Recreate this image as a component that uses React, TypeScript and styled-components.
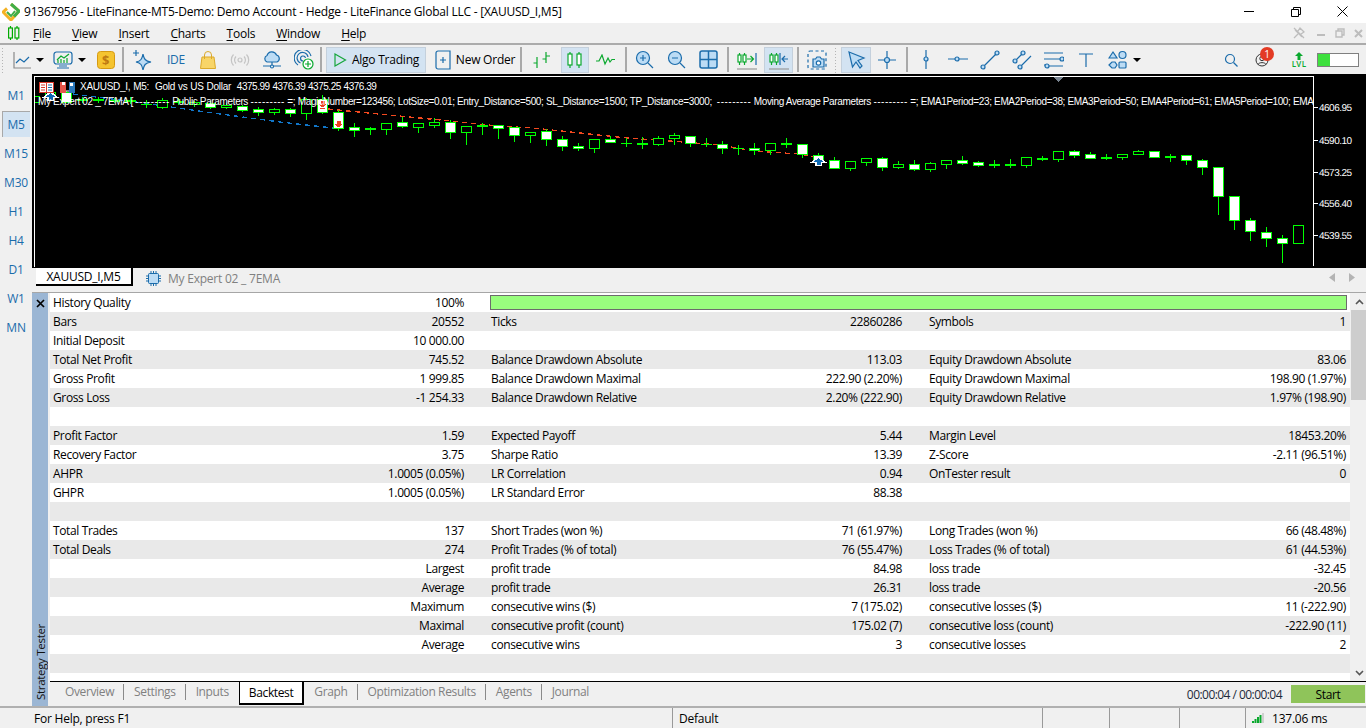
import React from "react";
import styled, { createGlobalStyle } from "styled-components";

const Global = createGlobalStyle`
  html, body { margin: 0; padding: 0; background: #f0f0f0; overflow: hidden; }
  * { box-sizing: border-box; }
`;
const FONT = `"Open Sans", "Noto Sans", sans-serif`;
const CHART_FONT = `"Liberation Sans", sans-serif`;
const BLUE = "#1b6cab";
const LIGHT = "#bcdcf5";
const GREEN = "#0aa82e";

const Page = styled.div`
  width: 1366px; height: 728px; display: flex; flex-direction: column; overflow: hidden;
  font-family: ${FONT}; font-size: 12px; color: #000; background: #f0f0f0; letter-spacing: -0.23px;
`;
const TitleBar = styled.div`
  height: 23px; background: #fff; display: flex; align-items: center; padding-left: 2px; flex: none;
`;
const TitleText = styled.span`margin-left: 4px; white-space: nowrap;`;
const WindowButtons = styled.div`margin-left: auto; display: flex; height: 100%;`;
const WindowButton = styled.div`width: 47px; display: flex; align-items: center; justify-content: center;`;
const MenuBar = styled.div`
  height: 20px; display: flex; align-items: center; padding-left: 8px; flex: none; position: relative;
`;
const MenuList = styled.div`display: flex; gap: 21px; margin-left: 13px;`;
const MenuItem = styled.span`white-space: nowrap; u { text-decoration-thickness: 1px; text-underline-offset: 2px; }`;
const DocButtons = styled.div`margin-left: auto; display: flex; align-items: center; gap: 6px; padding-right: 1px;`;
const Toolbar = styled.div`
  height: 31px; flex: none; border-top: 2px solid #ababab; display: flex; align-items: center;
`;
const Grip = styled.div<{ $w: number }>`
  width: ${p => p.$w}px; height: 26px; flex: none;
  background-image: radial-gradient(#b5b5b5 0.8px, transparent 1px);
  background-size: 3px 3px; background-repeat: repeat-y; background-position: 1px 0;
`;
const Sep = styled.div<{ $ml?: number }>`width: 2px; height: 25px; background: #a9a9a9; flex: none; margin-left: ${p => p.$ml ?? 0}px;`;
const Tool = styled.div<{ $w?: number; $on?: boolean; $ml?: number }>`
  width: ${p => p.$w ?? 32}px; height: 26px; flex: none; margin-left: ${p => p.$ml ?? 0}px;
  display: flex; align-items: center; justify-content: center; gap: 5px; white-space: nowrap;
  background: ${p => (p.$on ? "#d3e3f2" : "transparent")};
  box-shadow: ${p => (p.$on ? "inset 0 0 0 1px #c4d0dc, inset 1px 1px 0 #a8a8a8" : "none")};
`;
const IdeLabel = styled.span`color: ${BLUE}; font-size: 12px; font-weight: 400;`;
const Caret = styled.span`
  width: 0; height: 0; border-left: 4px solid transparent; border-right: 4px solid transparent; border-top: 4px solid #000;
`;
const Spacer = styled.div`flex: 1;`;
const Level = styled.div`
  width: 42px; height: 14px; border: 1px solid #808080; background: #fff; margin: 0 7px 0 3px; flex: none;
`;
const LevelFill = styled.div`width: 12px; height: 100%; background: #3ee03e;`;
const Body = styled.div`flex: 1; display: flex; min-height: 0;`;
const Frames = styled.div`
  width: 32px; flex: none; display: flex; flex-direction: column; padding-top: 8px; gap: 3px; align-items: center;
`;
const Frame = styled.div<{ $on?: boolean }>`
  width: 28px; height: 26px; display: flex; align-items: center; justify-content: center; color: ${BLUE}; font-size: 12px;
  background: ${p => (p.$on ? "#d3e3f2" : "transparent")};
  box-shadow: ${p => (p.$on ? "inset 1px 1px 0 #a8a8a8" : "none")};
`;
const Main = styled.div`flex: 1; min-width: 0; display: flex; flex-direction: column;`;
const Chart = styled.div`height: 194px; background: #000; position: relative; overflow: hidden; flex: none;`;
const ChartSvg = styled.svg`display: block; width: 1334px; height: 194px;`;
const Legend = styled.div`
  position: absolute; left: 48px; top: 7px; line-height: 12px; color: #fff; font-family: ${CHART_FONT}; font-size: 10px; white-space: pre; letter-spacing: -0.27px; word-spacing: 0.4px;
`;
const Quotes = styled.span`letter-spacing: -0.47px;`;
const Comment = styled.div`
  position: absolute; left: 6px; top: 22px; line-height: 12px; width: 1275px; overflow: hidden; color: #fff; font-family: ${CHART_FONT}; font-size: 10px; white-space: pre; letter-spacing: -0.35px;
`;
const Dashes = styled.span`letter-spacing: 0.5px;`;
const LegendIcon = styled.svg<{ $x: number }>`position: absolute; left: ${p => p.$x}px; top: 8px;`;
const TabStrip = styled.div`
  height: 24px; flex: none; display: flex; align-items: flex-start; padding-left: 4px; position: relative;
`;
const ChartTab = styled.div`
  width: 97px; height: 18px; background: #fff; border-right: 2px solid #000; border-bottom: 2px solid #000;
  display: flex; align-items: center; justify-content: center; font-size: 12px;
`;
const ExpertTab = styled.div`
  display: flex; align-items: center; gap: 7px; color: #808080; margin: 1px 0 0 13px; height: 19px;
`;
const TabArrows = styled.div`margin-left: auto; display: flex; gap: 14px; padding: 5px 11px 0 0;`;
const Tester = styled.div`flex: 1; min-height: 0; display: flex; border-top: 1px solid #a6a6a6;`;
const Side = styled.div`
  width: 16px; flex: none; background: #9bb6d4; margin-right: 2px; display: flex; flex-direction: column; align-items: center; justify-content: space-between;
`;
const SideX = styled.div`height: 20px; display: flex; align-items: center;`;
const SideLabel = styled.div`
  writing-mode: vertical-rl; transform: rotate(180deg); font-size: 11.5px; padding-top: 6px; letter-spacing: -0.3px; color: #111;
`;
const TesterBody = styled.div`flex: 1; min-width: 0; display: flex; flex-direction: column;`;
const TableArea = styled.div`height: 388px; flex: none; display: flex; background: #f0f0f0;`;
const Table = styled.div`width: 1300px; flex: none; background: #fff; height: 388px; letter-spacing: -0.37px;`;
const Row = styled.div<{ $alt: boolean }>`
  height: 19px; display: grid; grid-template-columns: 438px 438px 424px; background: ${p => (p.$alt ? "#e9e9e9" : "#fff")}; align-items: center;
`;
const Cell = styled.div<{ $last?: boolean }>`
  display: flex; justify-content: space-between; padding: 0 ${p => (p.$last ? 4 : 24)}px 0 3px; white-space: nowrap; position: relative;
`;
const Bar = styled.div`
  grid-column: 2 / 4; height: 15px; margin: 0 3px 0 2px; background: #99fe7e; border: 1px solid #6c6c6c;
`;
const Scroll = styled.div`width: 16px; margin-left: 1px; flex: none; display: flex; flex-direction: column;`;
const ScrollBtn = styled.div<{ $h: number }>`height: ${p => p.$h}px; flex: none; display: flex; align-items: center; justify-content: center;`;
const Thumb = styled.div`height: 90px; background: #cdcdcd; flex: none;`;
const Track = styled.div`flex: 1;`;
const BottomTabs = styled.div`
  flex: 1; border-top: 1px solid #000; display: flex; align-items: flex-start; position: relative; padding-left: 5px; color: #808080; letter-spacing: -0.37px;
`;
const BTab = styled.div<{ $on?: boolean; $sep?: boolean }>`
  height: 19px; margin-top: 0; padding: 0 10px; display: flex; align-items: center; position: relative; white-space: nowrap;
  ${p => p.$on ? `background:#fff;color:#000;height:23px;border:1px solid #000;border-top:none;border-bottom-width:2px;border-right-width:2px;padding:0 9px;` : ""}
  ${p => p.$sep ? `&::after{content:"";position:absolute;right:0;top:2px;height:16px;width:1px;background:#8a8a8a;}` : ""}
`;
const BTabs = styled.div`display: flex;`;
const TimeBox = styled.div`
  margin-left: auto; display: flex; align-items: center; height: 24px; color: #1d2a3a; gap: 9px; padding-right: 1px;
`;
const TimeText = styled.span`letter-spacing: -0.55px;`;
const Start = styled.div`
  width: 74px; height: 18px; background: #8fc45a; display: flex; align-items: center; justify-content: center; color: #000;
`;
const Status = styled.div`height: 22px; flex: none; border-top: 2px solid #b0b0b0; display: flex; align-items: stretch;`;
const StatusCell = styled.div<{ $w?: number; $first?: boolean }>`
  ${p => (p.$w ? `width:${p.$w}px;flex:none;` : "flex:1;")}
  border-left: ${p => (p.$first ? "none" : "1px solid #999")};
  display: flex; align-items: center; padding-left: ${p => (p.$first ? 34 : 6)}px; gap: 8px; white-space: nowrap;
`;

const S = ({ w = 20, h = 20, children }: { w?: number; h?: number; children: React.ReactNode }) => (
  <svg width={w} height={h} viewBox={`0 0 ${w} ${h}`} fill="none" stroke={BLUE} strokeWidth={1.2}>{children}</svg>
);

const Logo = () => (
  <svg width="18" height="18" viewBox="0 0 18 18" fill="none">
    <path d="M9 1 L17 8 L9 17 L1 9 L5 5.5" stroke="#f4b223" strokeWidth="3" />
    <path d="M9 1 L17 8 L12 13.5" stroke="#3fae49" strokeWidth="3" />
    <path d="M5 9 L9 13 L13 8" stroke="#3fae49" strokeWidth="2" />
  </svg>
);
const MenuChart = () => (
  <svg width="12" height="14" viewBox="0 0 12 14" fill="none" stroke="#0a0" strokeWidth="1.2" style={{ flex: "none" }}>
    <path d="M2.5 0v2M2.5 12v2M9 0v2M9 12v2" /><rect x="0.6" y="2" width="3.8" height="10" /><rect x="7" y="2" width="3.8" height="10" />
  </svg>
);
const Candle = ({ x, y, h, w = 4, c = GREEN }: { x: number; y: number; h: number; w?: number; c?: string }) => (
  <g stroke={c}><path d={`M${x} ${y - 2}V${y + h + 3}`} /><rect x={x - w / 2} y={y} width={w} height={h} fill="#fff" /></g>
);
const ICONS: Record<string, React.ReactNode> = {
  line: <S w={18} h={18}><path d="M1 1V17H18" stroke="#8a8a8a" /><path d="M3 12L7 8L11 11L16 6" /></S>,
  monitor: <S><rect x="1" y="2" width="18" height="12" rx="2.5" /><path d="M4 18H16M6 16H14" /><path d="M4 10L8 6L11 8L16 4" stroke={GREEN} /><path d="M5 13V10M8 13V9M11 13V10M14 13V8" stroke={GREEN} /></S>,
  gold: <svg width="18" height="18" viewBox="0 0 18 18"><rect x="0.5" y="0.5" width="17" height="17" rx="3" fill="#f5c430" stroke="#d69a12" /></svg>,
  spark: <S><path d="M11 4C12 9 13 11 19 12C13 13 12 15 11 20C10 15 9 13 4 12C9 11 10 9 11 4Z" fill={LIGHT} /><path d="M4 0V6M1 3H7" stroke={BLUE} /></S>,
  bag: <svg width="16" height="18" viewBox="0 0 16 18" fill="#f8d568" stroke="#dba92a"><path d="M2 6H14L15.5 17.5H0.5Z" /><path d="M4.5 8V4A3.5 3.5 0 0 1 11.5 4V8" fill="none" /></svg>,
  radio: <S h={14}><g stroke="#c4c4c4"><circle cx="10" cy="7" r="2" /><path d="M6 3.5A5 5 0 0 0 6 10.5M14 3.5A5 5 0 0 1 14 10.5M3.5 1.5A8 8 0 0 0 3.5 12.5M16.5 1.5A8 8 0 0 1 16.5 12.5" /></g></S>,
  cloud: <S><path d="M5 12A3.5 3.5 0 0 1 5 5.5A5 5 0 0 1 14.5 5A3.7 3.7 0 0 1 15 12Z" fill={LIGHT} /><path d="M10 12V16M1 16H19" /><circle cx="10" cy="16.5" r="1.5" fill="#fff" /></S>,
  signal: <S><path d="M4 15A8.5 8.5 0 1 1 17 6M6.5 13A5.5 5.5 0 1 1 14 7M9 11A2.5 2.5 0 1 1 11.5 8" /><circle cx="14" cy="14" r="5" fill="#fff" stroke={GREEN} /><path d="M14 11V17M11 14H17" stroke={GREEN} /></S>,
  play: <svg width="14" height="14" viewBox="0 0 14 14" fill="none" stroke="#16a63c" strokeWidth="1.2"><path d="M2 1L12.5 7L2 13Z" /></svg>,
  order: <S w={16} h={20}><path d="M3 1H15V19H3A2 2 0 0 1 1 17V3A2 2 0 0 1 3 1Z" /><path d="M8 7V13M5 10H11" /></S>,
  bars: <S h={18}><g stroke={GREEN}><path d="M5 6V17M1.5 12H5" /><path d="M14 1V12M14 5H18M10.5 8H14" /></g></S>,
  candles: <S h={20}><Candle x={5} y={4} h={11} /><Candle x={14} y={4} h={11} /></S>,
  wave: <S h={12}><path d="M0 7H3L6 1L9 10L12 4L14 8L16 5.5H19" stroke={GREEN} /></S>,
  zoomIn: <S><circle cx="8" cy="8" r="6.5" fill={LIGHT} /><path d="M13 13L18 18M5 8H11M8 5V11" /></S>,
  zoomOut: <S><circle cx="8" cy="8" r="6.5" fill={LIGHT} /><path d="M13 13L18 18M5 8H11" /></S>,
  grid: <S><rect x="1" y="1" width="17" height="17" rx="2" fill={LIGHT} strokeWidth="1.5" /><path d="M9.5 1V18M1 9.5H18" strokeWidth="1.5" /></S>,
  shiftR: <S h={20}><Candle x={2.5} y={5} h={7} w={3} /><Candle x={7.5} y={5} h={7} w={3} /><path d="M10 9H16M13.5 6L16.5 9L13.5 12" stroke={GREEN} /><path d="M19 3V15" /><path d="M0 19H20" stroke="#999" /></S>,
  shiftL: <S h={20}><Candle x={2.5} y={5} h={7} w={3} /><Candle x={7.5} y={5} h={7} w={3} /><path d="M11 3V15M13 9H19M16 6L13 9L16 12" /><path d="M0 19H20" stroke="#999" /></S>,
  camera: <S><rect x="1" y="1" width="18" height="18" rx="2" strokeDasharray="3 2.5" /><path d="M6 9H8.5L10 7H13L14.5 9H17V17H6Z" fill={LIGHT} /><circle cx="11.5" cy="13" r="2.2" fill="#fff" /></S>,
  cursor: <S><path d="M3 2L18 8L12 10.5L16 16L14 18L10 12L6.5 17Z" fill={LIGHT} /></S>,
  cross: <S h={18}><path d="M9 0V6M9 12V18M0 9H6M12 9H18" /><circle cx="9" cy="9" r="2.5" fill={LIGHT} /></S>,
  vline: <S w={8} h={20}><path d="M4 0V7M4 11V19" /><circle cx="4" cy="9" r="2" fill={LIGHT} /></S>,
  hline: <S><path d="M0 9H7M11 9H20" /><circle cx="9" cy="9" r="2" fill={LIGHT} /></S>,
  trend: <S><circle cx="3" cy="17" r="2" fill={LIGHT} /><circle cx="17" cy="3" r="2" fill={LIGHT} /><path d="M4.5 15.5L15.5 4.5" /></S>,
  channel: <S><circle cx="3" cy="11" r="2" fill={LIGHT} /><circle cx="11" cy="3" r="2" fill={LIGHT} /><circle cx="8" cy="17" r="2" fill={LIGHT} /><path d="M4.5 9.5L9.5 4.5M9.5 15.5L19 6" /></S>,
  fib: <S h={18}><path d="M0 2H19M0 8H16M0 14H2M5 15H19" /><circle cx="18" cy="8" r="2" fill={LIGHT} /><circle cx="3" cy="15" r="2" fill={LIGHT} /></S>,
  text: <S w={14} h={14}><path d="M0 1H14M7 1V14" /></S>,
  shapes: <S><path d="M5 2L9 8H1Z" fill={LIGHT} /><circle cx="14.5" cy="5" r="3.5" fill={LIGHT} /><path d="M1 15L4 12H7L9 15L7 18H4Z" fill={LIGHT} /><rect x="11" y="12" width="7" height="6" fill={LIGHT} rx="1" /></S>,
  search: <S w={14} h={14}><circle cx="6" cy="6" r="4.5" /><path d="M9.5 9.5L13.5 13.5" /></S>,
};
const Ico = ({ n }: { n: string }) => <>{ICONS[n]}</>;

const Badge = styled.span`
  position: absolute; left: 14px; top: 0; width: 14px; height: 14px; border-radius: 50%; background: #e33b24; color: #fff;
  font-size: 10px; display: flex; align-items: center; justify-content: center;
`;
const UserTool = styled(Tool)`position: relative;`;
const Lvl = styled.span`
  display: flex; flex-direction: column; align-items: center; color: ${GREEN}; font-size: 8px; line-height: 8px; font-weight: 600; letter-spacing: 0.3px;
`;
const Dollar = styled.span`
  position: absolute; color: #bf7a12; font-weight: 700; font-size: 13px;
`;
const GoldTool = styled(Tool)`position: relative;`;

type C = [string, number, number, number, number];
// type f=filled, h=hollow, t=thick doji, d=thin doji; bodyTop, bodyBottom, wickTop, wickBottom
const CANDLES: C[] = [
  ["h", 96, 102, 96, 102], ["h", 92, 96, 90, 97], ["f", 92, 102, 91, 102], ["t", 99, 100, 97, 102],
  ["t", 99, 100, 97, 102], ["t", 100, 101, 98, 102], ["t", 100, 101, 97, 103], ["d", 104, 104, 100, 107],
  ["h", 100, 107, 98, 108], ["t", 101, 102, 98, 104], ["h", 102, 104, 101, 106], ["f", 103, 107, 101, 108],
  ["h", 105, 107, 103, 108], ["f", 106, 110, 105, 111], ["f", 109, 112, 107, 115], ["h", 109, 112, 108, 114],
  ["f", 109, 113, 108, 116], ["h", 99, 113, 98, 119], ["f", 99, 112, 95, 113], ["f", 112, 128, 110, 130],
  ["f", 127, 130, 123, 136], ["t", 128, 130, 127, 134], ["h", 123, 129, 123, 134], ["f", 122, 126, 117, 127],
  ["h", 123, 127, 123, 132], ["h", 122, 125, 118, 127], ["f", 122, 132, 120, 138], ["h", 126, 132, 126, 144],
  ["t", 125, 127, 123, 134], ["f", 125, 128, 125, 138], ["f", 127, 135, 127, 141], ["h", 132, 135, 132, 142],
  ["f", 131, 139, 129, 145], ["f", 139, 146, 136, 150], ["f", 146, 148, 143, 150], ["h", 139, 148, 139, 152],
  ["f", 139, 142, 136, 142], ["d", 143, 143, 138, 146], ["t", 143, 144, 137, 148], ["h", 138, 144, 136, 145],
  ["h", 135, 138, 133, 144], ["f", 136, 143, 136, 146], ["d", 144, 144, 138, 146], ["f", 144, 148, 141, 153],
  ["d", 148, 148, 145, 154], ["f", 148, 150, 143, 154], ["h", 143, 150, 143, 154], ["t", 143, 145, 138, 147],
  ["f", 144, 154, 144, 157], ["f", 155, 161, 153, 161], ["f", 160, 168, 157, 168], ["h", 161, 168, 161, 170],
  ["h", 158, 162, 158, 165], ["f", 158, 167, 157, 170], ["h", 164, 167, 161, 168], ["f", 164, 169, 160, 170],
  ["h", 163, 169, 162, 171], ["h", 160, 164, 160, 168], ["f", 160, 163, 156, 164], ["f", 162, 165, 161, 166],
  ["t", 164, 165, 160, 167], ["t", 164, 165, 159, 167], ["h", 157, 165, 157, 167], ["t", 158, 159, 156, 160],
  ["h", 151, 159, 151, 161], ["f", 151, 155, 150, 157], ["f", 154, 158, 152, 158], ["t", 157, 158, 154, 159],
  ["h", 154, 157, 154, 159], ["h", 151, 154, 150, 154], ["f", 151, 157, 151, 157], ["t", 156, 157, 154, 161],
  ["f", 155, 160, 155, 164], ["f", 160, 167, 159, 174], ["f", 167, 196, 167, 214], ["f", 196, 220, 196, 229],
  ["f", 220, 231, 218, 240], ["f", 232, 238, 227, 246], ["f", 238, 243, 235, 262], ["h", 225, 243, 225, 243],
];
const RED = "328,109 358,112 420,118 460,122 498,126 533,128 580,133 627,138 657,140 683,142 720,145 743,149 767,152 800,154 815,157";
const BLUE_LINE = "73,94 143,103 213,113 280,122 333,128";
const TICKS: [string, number][] = [["4606.95", 107], ["4590.10", 140], ["4573.25", 172], ["4556.40", 203], ["4539.55", 235]];

const ArrowMark = ({ x, y, color, up, outline }: { x: number; y: number; color: string; up?: boolean; outline?: boolean }) => {
  const d = up
    ? `M${x} ${y}L${x + 4.5} ${y + 3.5}H${x + 2}V${y + 6.5}H${x - 2}V${y + 3.5}H${x - 4.5}Z`
    : `M${x} ${y + 6.5}L${x + 4.5} ${y + 3}H${x + 2}V${y}H${x - 2}V${y + 3}H${x - 4.5}Z`;
  return <>{outline && <path d={d} stroke="#fff" strokeWidth="3" fill="#fff" />}<path d={d} fill={color} /></>;
};

const ChartDrawing = () => (
  <ChartSvg viewBox="32 74 1334 194" shapeRendering="crispEdges">
    <g stroke="#fff" fill="none"><path d="M34.5 76.5H1313.5V266M34.5 76V267" /></g>
    <path d="M1053 77H1063L1058 82Z" fill="#78838f" />
    <svg x="35" y="77" width="1278" height="189" viewBox="35 77 1278 189" shapeRendering="crispEdges">
      <polyline points={BLUE_LINE} fill="none" stroke="#1176c8" strokeWidth="1.3" strokeDasharray="5 4" />
      <polyline points={RED} fill="none" stroke="#f4491f" strokeWidth="1.3" strokeDasharray="5 4" />
      {CANDLES.map(([t, bt, bb, wt, wb], i) => {
        const c = 34 + i * 16;
        const body = t === "f" || t === "h";
        return (
          <g key={i}>
            <rect x={c} y={wt} width="1" height={wb - wt + 1} fill="#00ff00" />
            {t === "d" && <rect x={c - 5} y={bt} width="11" height="1" fill="#00ff00" />}
            {t === "t" && <rect x={c - 5} y={bt} width="11" height="2" fill="#00ff00" />}
            {body && <rect x={c - 5} y={bt} width="11" height={bb - bt + 1} fill="#00ff00" />}
            {body && <rect x={c - 4} y={bt + 1} width="9" height={bb - bt - 1} fill={t === "f" ? "#fff" : "#000"} />}
          </g>
        );
      })}
      <ArrowMark x={50.5} y={93} color="#0f6ab4" up outline />
      <ArrowMark x={322.5} y={101} color="#ef4123" />
      <path d="M320 108.5H325" stroke="#ef4123" />
      <ArrowMark x={338.5} y={121} color="#ef4123" />
      <ArrowMark x={818.5} y={158} color="#0f6ab4" up outline />
    </svg>
    {TICKS.map(([t, y]) => (
      <g key={t}>
        <path d={`M1313 ${y + 0.5}H1318`} stroke="#fff" />
        <text x="1319" y={y + 4} fill="#fff" fontFamily='"Liberation Sans", sans-serif' fontSize="10" letterSpacing="-0.5" textRendering="geometricPrecision">{t}</text>
      </g>
    ))}
  </ChartSvg>
);

type Cl = [string, string] | null;
const ROWS: [Cl, Cl, Cl][] = [
  [["History Quality", "100%"], null, null],
  [["Bars", "20552"], ["Ticks", "22860286"], ["Symbols", "1"]],
  [["Initial Deposit", "10 000.00"], null, null],
  [["Total Net Profit", "745.52"], ["Balance Drawdown Absolute", "113.03"], ["Equity Drawdown Absolute", "83.06"]],
  [["Gross Profit", "1 999.85"], ["Balance Drawdown Maximal", "222.90 (2.20%)"], ["Equity Drawdown Maximal", "198.90 (1.97%)"]],
  [["Gross Loss", "-1 254.33"], ["Balance Drawdown Relative", "2.20% (222.90)"], ["Equity Drawdown Relative", "1.97% (198.90)"]],
  [null, null, null],
  [["Profit Factor", "1.59"], ["Expected Payoff", "5.44"], ["Margin Level", "18453.20%"]],
  [["Recovery Factor", "3.75"], ["Sharpe Ratio", "13.39"], ["Z-Score", "-2.11 (96.51%)"]],
  [["AHPR", "1.0005 (0.05%)"], ["LR Correlation", "0.94"], ["OnTester result", "0"]],
  [["GHPR", "1.0005 (0.05%)"], ["LR Standard Error", "88.38"], null],
  [null, null, null],
  [["Total Trades", "137"], ["Short Trades (won %)", "71 (61.97%)"], ["Long Trades (won %)", "66 (48.48%)"]],
  [["Total Deals", "274"], ["Profit Trades (% of total)", "76 (55.47%)"], ["Loss Trades (% of total)", "61 (44.53%)"]],
  [["", "Largest"], ["profit trade", "84.98"], ["loss trade", "-32.45"]],
  [["", "Average"], ["profit trade", "26.31"], ["loss trade", "-20.56"]],
  [["", "Maximum"], ["consecutive wins ($)", "7 (175.02)"], ["consecutive losses ($)", "11 (-222.90)"]],
  [["", "Maximal"], ["consecutive profit (count)", "175.02 (7)"], ["consecutive loss (count)", "-222.90 (11)"]],
  [["", "Average"], ["consecutive wins", "3"], ["consecutive losses", "2"]],
  [null, null, null],
];

const DataCell = ({ c, last }: { c: Cl; last?: boolean }) => (
  <Cell $last={last}>
    <span>{c ? c[0] : ""}</span>
    <span>{c ? c[1] : ""}</span>
  </Cell>
);

const Tri = ({ d, c = "#b4b4b4" }: { d: string; c?: string }) => (
  <svg width="6" height="9" viewBox="0 0 6 9"><path d={d} fill={c} /></svg>
);
const Chev = ({ up }: { up?: boolean }) => (
  <svg width="9" height="6" viewBox="0 0 9 6" fill="none" stroke="#555" strokeWidth="1.6"><path d={up ? "M1 5L4.5 1.5L8 5" : "M1 1L4.5 4.5L8 1"} /></svg>
);

export default function App() {
  return (
    <Page>
      <Global />
      <TitleBar>
        <Logo />
        <TitleText>91367956 - LiteFinance-MT5-Demo: Demo Account - Hedge - LiteFinance Global LLC - [XAUUSD_I,M5]</TitleText>
        <WindowButtons>
          <WindowButton><svg width="10" height="1"><path d="M0 .5H10" stroke="#000" /></svg></WindowButton>
          <WindowButton><svg width="10" height="10" fill="none" stroke="#000"><path d="M.5 2.5H7.5V9.5H.5ZM2.5 2.5V.5H9.5V7.5H7.5" /></svg></WindowButton>
          <WindowButton><svg width="11" height="11" stroke="#000"><path d="M.5 .5L10.5 10.5M10.5 .5L.5 10.5" /></svg></WindowButton>
        </WindowButtons>
      </TitleBar>
      <MenuBar>
        <MenuChart />
        <MenuList>
          {["File", "View", "Insert", "Charts", "Tools", "Window", "Help"].map(m => (
            <MenuItem key={m}><u>{m[0]}</u>{m.slice(1)}</MenuItem>
          ))}
        </MenuList>
        <DocButtons>
          <svg width="12" height="12" fill="none" stroke="#bdbdbd" strokeWidth="1.3"><path d="M7 1L11 5L8 7V9L3 4H5ZM5 7L1 11M1 1L11 11" /></svg>
          <svg width="12" height="12" style={{ marginLeft: 4 }}><path d="M2 7H10V9H2Z" fill="#bdbdbd" /></svg>
          <svg width="12" height="12" fill="none" stroke="#bdbdbd" strokeWidth="1.4" style={{ marginLeft: 1 }}><path d="M2 4H8V10H2ZM4 4V2H10V8H8" /></svg>
          <svg width="12" height="12" stroke="#bdbdbd" strokeWidth="2" style={{ marginLeft: 1 }}><path d="M2 3L9 10M9 3L2 10" /></svg>
        </DocButtons>
      </MenuBar>
      <Toolbar>
        <Grip $w={8} />
        <Tool $w={40}><Ico n="line" /><Caret /></Tool>
        <Tool $w={40} $ml={1}><Ico n="monitor" /><Caret /></Tool>
        <GoldTool $w={33}><Ico n="gold" /><Dollar>$</Dollar></GoldTool>
        <Sep />
        <Tool $w={36}><Ico n="spark" /></Tool>
        <Tool><IdeLabel>IDE</IdeLabel></Tool>
        <Tool><Ico n="bag" /></Tool>
        <Tool><Ico n="radio" /></Tool>
        <Tool><Ico n="cloud" /></Tool>
        <Tool><Ico n="signal" /></Tool>
        <Sep />
        <Tool $w={100} $on $ml={4}><Ico n="play" /><span>Algo Trading</span></Tool>
        <Tool $w={90} $ml={4}><Ico n="order" /><span>New Order</span></Tool>
        <Sep />
        <Tool $ml={4}><Ico n="bars" /></Tool>
        <Tool $on $w={28} $ml={3}><Ico n="candles" /></Tool>
        <Tool $ml={1}><Ico n="wave" /></Tool>
        <Sep $ml={3} />
        <Tool $ml={2}><Ico n="zoomIn" /></Tool>
        <Tool><Ico n="zoomOut" /></Tool>
        <Tool><Ico n="grid" /></Tool>
        <Sep $ml={2} />
        <Tool $ml={2}><Ico n="shiftR" /></Tool>
        <Tool $on $w={29} $ml={1}><Ico n="shiftL" /></Tool>
        <Sep $ml={4} />
        <Tool $ml={2}><Ico n="camera" /></Tool>
        <Grip $w={6} />
        <Tool $on $w={30} $ml={2}><Ico n="cursor" /></Tool>
        <Tool $ml={1}><Ico n="cross" /></Tool>
        <Sep $ml={2} />
        <Tool $ml={2}><Ico n="vline" /></Tool>
        <Tool><Ico n="hline" /></Tool>
        <Tool><Ico n="trend" /></Tool>
        <Tool><Ico n="channel" /></Tool>
        <Tool><Ico n="fib" /></Tool>
        <Tool><Ico n="text" /></Tool>
        <Tool $w={44}><Ico n="shapes" /><Caret /></Tool>
        <Spacer />
        <Tool $w={30}><Ico n="search" /></Tool>
        <UserTool $w={32}>
          <svg width="14" height="14" viewBox="0 0 14 14" fill="none" stroke="#333"><circle cx="7" cy="7" r="6" /><circle cx="7" cy="5.5" r="2.2" /><path d="M3 11.5C4 9 10 9 11 11.5" /></svg>
          <Badge>1</Badge>
        </UserTool>
        <Tool $w={30} $ml={6}>
          <Lvl>
            <svg width="8" height="8" viewBox="0 0 8 8" fill={GREEN}><path d="M4 0L8 4H5.5V8H2.5V4H0Z" /></svg>
            LVL
          </Lvl>
        </Tool>
        <Level><LevelFill /></Level>
      </Toolbar>
      <Body>
        <Frames>
          {["M1", "M5", "M15", "M30", "H1", "H4", "D1", "W1", "MN"].map(f => (
            <Frame key={f} $on={f === "M5"}>{f}</Frame>
          ))}
        </Frames>
        <Main>
          <Chart>
            <ChartDrawing />
            <LegendIcon $x={7} width="15" height="11" viewBox="0 0 15 11">
              <rect x=".5" y=".5" width="14" height="10" fill="#fff" stroke="#d8382b" />
              <path d="M7.5 1V10" stroke="#d8382b" />
              <path d="M2 3H6M2 5.5H6M2 8H6" stroke="#d8382b" />
              <path d="M9 3H13M9 5.5H13M9 8H13" stroke="#1b6cab" />
            </LegendIcon>
            <LegendIcon $x={28} width="15" height="11" viewBox="0 0 15 11">
              <path d="M0 0H6V11H0Z" fill="#e5564a" /><path d="M2 0H5V3H2Z" fill="#fff" />
              <path d="M9 0H15V11H9Z" fill="#2b78bb" /><path d="M10 1H13V4H10Z" fill="#fff" />
              <path d="M6 9H9" stroke="#fff" />
            </LegendIcon>
            <Legend>XAUUSD_I, M5:  Gold vs US Dollar  <Quotes>4375.99 4376.39 4375.25 4376.39</Quotes></Legend>
            <Comment>My Expert 02 _ 7EMA [ <Dashes>---------</Dashes> Public Parameters <Dashes>---------</Dashes> =; MagicNumber=123456; LotSize=0.01; Entry_Distance=500; SL_Distance=1500; TP_Distance=3000;  <Dashes>---------</Dashes> Moving Average Parameters <Dashes>---------</Dashes> =; EMA1Period=23; EMA2Period=38; EMA3Period=50; EMA4Period=61; EMA5Period=100; EMA6Period=150</Comment>
          </Chart>
          <TabStrip>
            <ChartTab>XAUUSD_I,M5</ChartTab>
            <ExpertTab>
              <svg width="15" height="15" viewBox="0 0 15 15" fill="none" stroke={BLUE}>
                <rect x="2.5" y="2.5" width="10" height="10" rx="1" fill={LIGHT} />
                <path d="M5 0V2M7.5 0V2M10 0V2M5 13V15M7.5 13V15M10 13V15M0 5H2M0 7.5H2M0 10H2M13 5H15M13 7.5H15M13 10H15" />
              </svg>
              <span>My Expert 02 _ 7EMA</span>
            </ExpertTab>
            <TabArrows>
              <Tri d="M6 0V9L0 4.5Z" />
              <Tri d="M0 0V9L6 4.5Z" />
            </TabArrows>
          </TabStrip>
          <Tester>
            <Side>
              <SideX>
                <svg width="9" height="9" stroke="#000" strokeWidth="1.7"><path d="M1 1L8 8M8 1L1 8" /></svg>
              </SideX>
              <SideLabel>Strategy Tester</SideLabel>
            </Side>
            <TesterBody>
              <TableArea>
                <Table>
                  {ROWS.map((r, i) => (
                    <Row key={i} $alt={i % 2 === 1}>
                      <DataCell c={r[0]} />
                      {i === 0 ? <Bar /> : (<><DataCell c={r[1]} /><DataCell c={r[2]} last /></>)}
                    </Row>
                  ))}
                </Table>
                <Scroll>
                  <ScrollBtn $h={17}><Chev up /></ScrollBtn>
                  <Thumb />
                  <Track />
                  <ScrollBtn $h={17}><Chev /></ScrollBtn>
                </Scroll>
              </TableArea>
              <BottomTabs>
                <BTabs>
                  <BTab $sep>Overview</BTab>
                  <BTab $sep>Settings</BTab>
                  <BTab>Inputs</BTab>
                  <BTab $on>Backtest</BTab>
                  <BTab $sep>Graph</BTab>
                  <BTab $sep>Optimization Results</BTab>
                  <BTab $sep>Agents</BTab>
                  <BTab>Journal</BTab>
                </BTabs>
                <TimeBox>
                  <TimeText>00:00:04 / 00:00:04</TimeText>
                  <Start>Start</Start>
                </TimeBox>
              </BottomTabs>
            </TesterBody>
          </Tester>
        </Main>
      </Body>
      <Status>
        <StatusCell $first $w={672}>For Help, press F1</StatusCell>
        <StatusCell $w={370}>Default</StatusCell>
        <StatusCell $w={67} />
        <StatusCell $w={70} />
        <StatusCell $w={66} />
        <StatusCell>
          <svg width="12" height="10" viewBox="0 0 12 10">
            <path d="M0 8h2v2H0zM2.5 6h2v4h-2zM5 4h2v6H5zM7.5 2h2v8h-2z" fill="#0aa82e" /><path d="M10 0h2v10h-2z" fill="#cfcfcf" />
          </svg>
          <span>137.06 ms</span>
        </StatusCell>
      </Status>
    </Page>
  );
}
